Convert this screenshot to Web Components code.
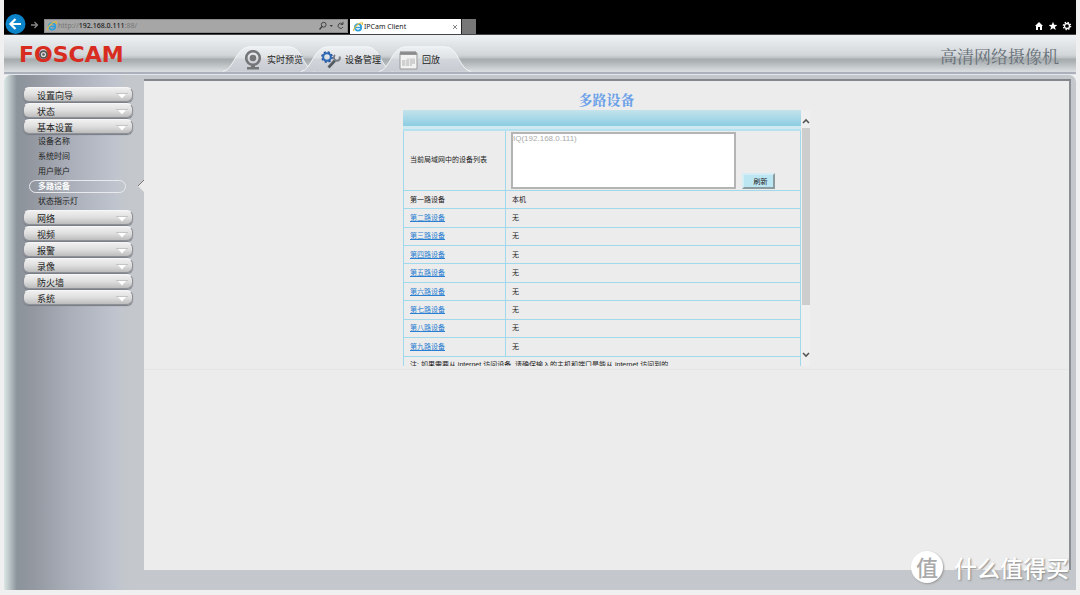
<!DOCTYPE html>
<html lang="zh-CN">
<head>
<meta charset="utf-8">
<title>IPCam Client</title>
<style>
html { background: #f0f0f0; }
body { margin: 0; color: #222; font-family: "Liberation Sans", "Noto Sans CJK SC", sans-serif; }
</style>
</head>
<body>
<ipcam-app></ipcam-app>
<script>
const define = (name, html, setup) => {
  const template = document.createElement('template');
  template.innerHTML = '<style>*{box-sizing:border-box}:host{box-sizing:border-box}</style>' + html;
  customElements.define(name, class extends HTMLElement {
    connectedCallback() {
      if (this.shadowRoot) return;
      this.attachShadow({ mode: 'open' }).append(template.content.cloneNode(true));
      if (setup) setup(this, this.shadowRoot);
    }
  });
};

define('ie-icon', `
<style>:host{display:block;width:10px;height:10px;flex:none} svg{display:block}</style>
<svg width="10" height="10" viewBox="0 0 10 10" fill="none" aria-hidden="true">
<circle cx="5" cy="5.4" r="3.2" stroke="#2f9fdc" stroke-width="1.8"/>
<path d="M2.5 5.5H8.5" stroke="#2f9fdc" stroke-width="1.4"/>
<path d="M1 9C-.5 7 5 .6 9 .8C10 1 9.3 2.4 9 3" stroke="#e8bf35" stroke-width="1.1"/></svg>`);

define('browser-bar', `
<style>
:host{display:flex;align-items:flex-end;height:35px;background:#000;padding:0 4px 0 1px;border-bottom:1px solid #444}
button{border:0;padding:0;background:none;display:block}
svg{display:block}
.fwd{margin:0 5px 4px 4px}
.address{display:flex;align-items:center;width:304px;height:14px;margin-bottom:1px;background:#a6a6a6;border:1px solid #8a8a8a;padding:0 2px;gap:1px}
.url{flex:1;font:7px/12px "Noto Sans",sans-serif;color:#777}
.url b{font-weight:500;color:#222}
.tab{display:flex;align-items:center;width:111px;height:15px;margin-left:2px;background:#fff;padding:0 3px;gap:1px;font:7px/15px "Noto Sans",sans-serif;color:#222}
.tab span{flex:1}
.new{width:15px;height:15px;background:#777;border-left:1px solid #222}
.tools{margin-left:auto;display:flex;gap:4px;padding-bottom:3px}
</style>
<button aria-label="后退"><svg width="21" height="20" viewBox="0 0 21 20"><circle cx="10.5" cy="10" r="10" fill="#0b84c9"/><path d="M16 10H6M10.5 5L5.5 10L10.5 15" fill="none" stroke="#fff" stroke-width="2.2"/></svg></button>
<button class="fwd" aria-label="前进"><svg width="9" height="10" viewBox="0 0 9 10"><path d="M1 5H7M4.5 2L7.5 5L4.5 8" fill="none" stroke="#888" stroke-width="1.3"/></svg></button>
<div class="address"><ie-icon></ie-icon><span class="url">http://<b>192.168.0.111</b>:88/</span>
<svg width="26" height="10" viewBox="0 0 26 10" fill="none" stroke="#444"><circle cx="4.7" cy="3.7" r="2.4"/><path d="M3 5.5L.5 8.5" stroke-width="1.4"/><path d="M10.5 4H14L12.2 6Z" fill="#444" stroke="none"/><path d="M23.6 3A2.6 2.6 0 1 0 24 6M21.5 3.4H24V.8"/></svg></div>
<div class="tab"><ie-icon></ie-icon><span>IPCam Client</span><svg width="6" height="6" viewBox="0 0 6 6"><path d="M1 1L5 5M5 1L1 5" stroke="#777" stroke-width=".9"/></svg></div>
<button class="new" aria-label="新建选项卡"></button>
<div class="tools">
<button aria-label="主页"><svg width="10" height="10" viewBox="0 0 10 10"><path d="M5 1L9 5H8V9H6V6H4V9H2V5H1Z" fill="#fff"/></svg></button>
<button aria-label="收藏夹"><svg width="10" height="10" viewBox="0 0 10 10"><path d="M5 .8L6.2 3.8L9.3 4L6.9 5.9L7.8 9L5 7.2L2.2 9L3.1 5.9L.7 4L3.8 3.8Z" fill="#fff"/></svg></button>
<button aria-label="工具"><svg width="10" height="10" viewBox="0 0 10 10" fill="none" stroke="#fff"><circle cx="5" cy="5" r="2.5" stroke-width="1.3"/><circle cx="5" cy="5" r="3.6" stroke-width="1.4" stroke-dasharray="1.4 1.43"/></svg></button>
</div>`);

define('foscam-logo', `
<style>
:host{display:block}
a{display:block;color:#d82c20;text-decoration:none;font:bold 22px/24px "DejaVu Sans",sans-serif}
.o{position:relative}
svg{position:absolute;left:5px;top:8px}
</style>
<a href="#">F<span class="o">O<svg width="9" height="9" viewBox="0 0 9 9" aria-hidden="true"><circle cx="4.5" cy="4.5" r="4.3" fill="#555"/><circle cx="4.5" cy="4.5" r="2.6" fill="#ddd"/><circle cx="4.5" cy="4.5" r="1.3" fill="#555"/></svg></span>SCAM</a>`);

define('nav-tab', `
<style>
:host{display:block;width:92px;margin-right:-14px}
a{position:relative;display:flex;align-items:center;height:26px;gap:4px;padding:2px 0 0 20px;color:#222;text-decoration:none;font-size:9px;line-height:12px}
.shape{position:absolute;inset:0}
::slotted(svg){position:relative;flex:none}
span{position:relative}
</style>
<a href="#"><svg class="shape" width="92" height="26" viewBox="0 0 92 26" aria-hidden="true"><defs><linearGradient id="g" x2="0" y2="1"><stop stop-color="#eef1f3"/><stop offset=".45" stop-color="#dfe2e5"/><stop offset=".5" stop-color="#d2d5da"/><stop offset="1" stop-color="#c8ccd3"/></linearGradient></defs><path d="M0 25.5C11 24 12 1 27 .7H66C80 1 80 24 92 25.5Z" fill="url(#g)"/><path d="M0 25.5C11 24 12 1 27 .7H66C80 1 80 24 92 25.5" fill="none" stroke="#f4f6f7" stroke-width=".9"/></svg>
<slot name="icon"></slot><span><slot></slot></span></a>`);

define('app-header', `
<style>
:host{display:block}
.bar{display:flex;align-items:flex-end;height:37px;padding:0 17px 0 15px;background:linear-gradient(#eef2f4 0,#d2d6d8 20px,#bcc1c3 23px,#a6abad 24px,#aeb3b5 27px,#d8dcde 36px)}
foscam-logo{width:204px;margin-bottom:5px}
nav{display:flex;height:26px}
h1{margin:0 0 4px auto;font:17px/24px "Noto Serif CJK SC","Noto Sans CJK SC",serif;color:#677079}
.rule{height:3px;background:#abb0bb;border-bottom:1px solid #e2e7ec}
</style>
<div class="bar"><foscam-logo></foscam-logo>
<nav>
<nav-tab>实时预览<svg slot="icon" width="20" height="20" viewBox="0 0 20 20"><circle cx="10" cy="8" r="6.8" fill="none" stroke="#747678" stroke-width="2.6"/><circle cx="10" cy="8" r="3.3" fill="#747678"/><path d="M8 15H12V17H16V19.5H4V17H8Z" fill="#747678"/></svg></nav-tab>
<nav-tab>设备管理<svg slot="icon" width="20" height="20" viewBox="0 0 20 20" fill="none"><circle cx="6" cy="7" r="3.8" stroke="#2868b9" stroke-width="2"/><circle cx="6" cy="7" r="5.2" stroke="#244b93" stroke-width="1.3" stroke-dasharray="2.2 1.9"/><path d="M7.5 17.5L14 10.5" stroke="#555b62" stroke-width="2.8"/><path d="M14 5C12 7 13 10.5 15.5 10.8C18 11 19.5 9 18.5 6.5" stroke="#777d83" stroke-width="1.9"/></svg></nav-tab>
<nav-tab>回放<svg slot="icon" width="19" height="20" viewBox="0 0 19 20"><path d="M1 3H18V19H1Z" fill="#f2f2f2" stroke="#999"/><path d="M1 2.5H18V5H1Z" fill="#999"/><path d="M2 1V4M4 1V4M6 1V4M8 1V4M10 1V4M12 1V4M14 1V4M16 1V4" stroke="#777"/><path d="M3 10H8V8.5H16V14H13V16H3Z" fill="#d0d0d0"/><path d="M6.5 9V16M10.5 9V16" stroke="#e6e6e6"/></svg></nav-tab>
</nav><h1>高清网络摄像机</h1></div><div class="rule"></div>`);

define('menu-group', `
<style>
:host{display:block}
button{display:flex;align-items:center;justify-content:space-between;width:100%;height:15px;border:1px solid #8d9095;border-top-color:#f6f6f6;border-radius:6px;padding:2px 4px 0 13px;background:linear-gradient(#f0f0f0,#dedede 50%,#bdbdbd);box-shadow:0 1px 1px #777b84;color:#222;font:9px/12px "Noto Sans CJK SC",sans-serif}
svg{display:block}
</style>
<button><slot></slot><svg width="12" height="6" viewBox="0 0 12 6" aria-hidden="true"><path d="M0 .5H12" stroke="#c4c4c4"/><path d="M2 1H10L6 5.5Z" fill="#fff"/></svg></button>`);

define('menu-item', `
<style>
:host{display:block;height:15px;padding:1px 7px 1px 6px}
a{display:flex;align-items:center;height:13px;border:1px solid transparent;border-radius:7px;padding-left:8px;color:#222;text-decoration:none;font-size:8px;line-height:12px}
:host([current]) a{border-color:#e8eaee;color:#fff;font-weight:bold}
</style>
<a href="#"><slot></slot></a>`);

define('side-menu', `
<style>
:host{position:relative;display:block;width:140px;flex:none;padding:12px 11px 0 19px}
nav{display:grid;gap:1px}
.sub{margin:-1px 0 0}
.notch{position:absolute;right:0;top:105px}
</style>
<nav><menu-group>设置向导</menu-group><menu-group>状态</menu-group><menu-group>基本设置</menu-group>
<div class="sub"><menu-item>设备名称</menu-item><menu-item>系统时间</menu-item><menu-item>用户账户</menu-item><menu-item current>多路设备</menu-item><menu-item>状态指示灯</menu-item></div>
<menu-group>网络</menu-group><menu-group>视频</menu-group><menu-group>报警</menu-group><menu-group>录像</menu-group><menu-group>防火墙</menu-group><menu-group>系统</menu-group></nav>
<svg class="notch" width="6" height="12" viewBox="0 0 6 12" aria-hidden="true"><path d="M6 0L0 6L6 12Z" fill="#ececec"/><path d="M6 0L0 6" stroke="#777"/></svg>`);

define('device-table', `
<style>
:host{display:block;flex:1;min-width:0;font-size:7px;line-height:12px}
.head{height:19px;background:linear-gradient(#c4e3ec,#8ccde2);border-bottom:3px solid #cfe9f1}
table{width:100%;height:246px;border-collapse:collapse;table-layout:fixed;border:1px solid #a0d9ec;border-top:2px solid #b5e1f0}
th,td{border:1px solid #a0d9ec;padding:0 6px;height:18px;font-weight:normal;text-align:left;color:#222}
th{width:102px}
.list th,.list td{height:59px}
.list td{padding:0 5px}
.field{display:flex;align-items:flex-end;gap:6px}
select{width:225px;height:57px;border:2px solid #b4b4b4;border-radius:0;background:#fff;padding:0;font:8px "Liberation Sans",sans-serif;overflow:hidden}
option{color:#aaa;padding:0;min-height:0}
button{width:33px;height:16px;padding:0 0 0 4px;border:2px outset #d5edf4;border-radius:0;background:#bce6f2;color:#222;font:7px/10px "Noto Sans CJK SC",sans-serif}
a{color:#2a7fd0}
</style>
<div class="head"></div>
<table><tbody>
<tr class="list"><th><label for="lan">当前局域网中的设备列表</label></th><td><div class="field"><select id="lan" size="4"><option>IQ(192.168.0.111)</option></select><button>刷新</button></div></td></tr>
</tbody></table>`, (host, root) => {
  const body = root.querySelector('tbody');
  for (const n of '一二三四五六七八九') {
    const label = '第' + n + '路设备';
    body.insertAdjacentHTML('beforeend', n === '一'
      ? '<tr><th>' + label + '</th><td>本机</td></tr>'
      : '<tr><th><a href="#">' + label + '</a></th><td>无</td></tr>');
  }
  body.insertAdjacentHTML('beforeend', '<tr><td colspan="2">注: 如果需要从 internet 访问设备, 请确保输入的主机和端口是能从 internet 访问到的</td></tr>');
});

define('scroll-track', `
<style>
:host{display:flex;flex-direction:column;align-items:center;width:9px;flex:none;padding:8px 0;background:#efefef}
svg{display:block;flex:none}
.thumb{width:8px;flex:1;margin:3px 0 46px;background:#cdcdcd}
</style>
<svg width="8" height="7" viewBox="0 0 8 7"><path d="M1 5L4 2L7 5" fill="none" stroke="#555" stroke-width="1.6"/></svg>
<div class="thumb"></div>
<svg width="8" height="7" viewBox="0 0 8 7"><path d="M1 2L4 5L7 2" fill="none" stroke="#555" stroke-width="1.6"/></svg>`);

define('device-page', `
<style>
:host{display:block;flex:1;min-width:0;background:#ececec;border-top:2px solid #83868b;border-right:2px solid #8b8e92}
section{padding:8px 0 3px;border-bottom:1px solid #e5e5e5}
h2{margin:0 0 1px;text-align:center;font:bold 14px/20px "Noto Serif CJK SC","Noto Sans CJK SC",serif;color:#6aa0e8}
.view{display:flex;width:407px;max-width:100%;height:256px;margin:0 auto;overflow:hidden}
</style>
<section><h2>多路设备</h2><div class="view"><device-table></device-table><scroll-track></scroll-track></div></section>`);

define('site-watermark', `
<style>
:host{position:absolute;right:11px;bottom:11px;display:flex;align-items:center;gap:11px;color:#fff;font:500 23px/34px "Noto Sans CJK SC",sans-serif;text-shadow:1px 1px 2px #888}
.badge{width:32px;height:32px;border-radius:50%;background:#fff;color:#aaa;font-size:22px;line-height:30px;text-align:center;text-shadow:none;box-shadow:1px 1px 2px #999}
</style>
<span class="badge">值</span><span>什么值得买</span>`);

define('ipcam-app', `
<style>
:host{position:relative;display:flex;flex-direction:column;min-height:100vh;padding:0 4px 5px}
main{flex:1;display:flex;padding:4px 5px 0 0;border-radius:7px 7px 0 0;background:linear-gradient(90deg,#dbe6e5 0,#c3cecf 4px,#8b939b 13px,#9498a1 30px,#a9aeb8 65px,#bfc3cd 110px,#c4c8cc 125px)}
side-menu{margin-top:-4px}
device-page{margin-bottom:20px}
</style>
<browser-bar></browser-bar><app-header></app-header>
<main><side-menu></side-menu><device-page></device-page></main>
<site-watermark></site-watermark>`);
</script>
</body>
</html>
